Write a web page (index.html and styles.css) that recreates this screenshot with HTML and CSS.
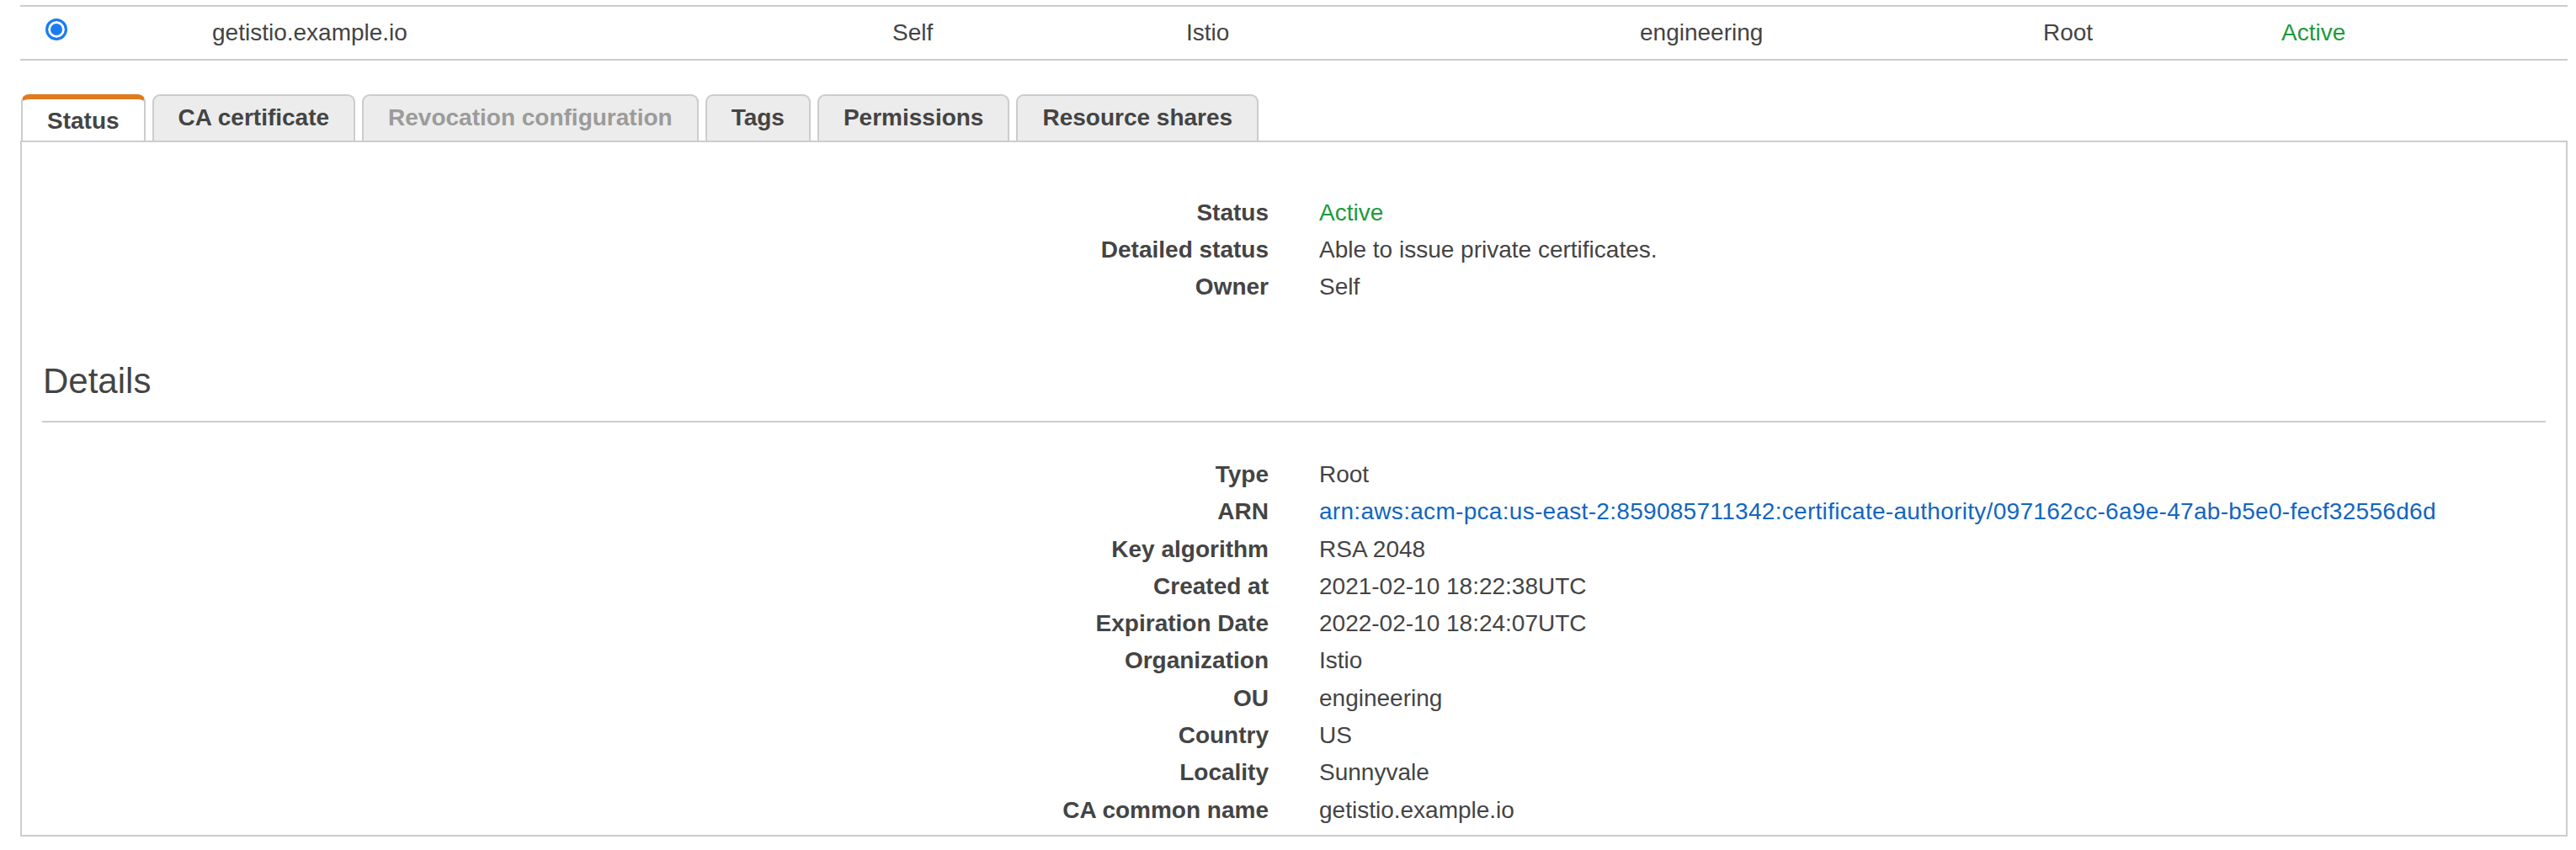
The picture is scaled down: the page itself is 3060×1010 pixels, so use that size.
FILE: index.html
```html
<!DOCTYPE html>
<html lang="en">
<head>
<meta charset="utf-8">
<title>Certificate authority</title>
<link rel="stylesheet" href="styles.css">
</head>
<body>
<div class="page">
  <div class="ca-row">
    <div class="cell cell-radio"><span class="radio"></span></div>
    <div class="cell">getistio.example.io</div>
    <div class="cell">Self</div>
    <div class="cell">Istio</div>
    <div class="cell">engineering</div>
    <div class="cell">Root</div>
    <div class="cell ok">Active</div>
  </div>

  <div class="tabs">
    <div class="tab active">Status</div>
    <div class="tab">CA certificate</div>
    <div class="tab disabled">Revocation configuration</div>
    <div class="tab">Tags</div>
    <div class="tab">Permissions</div>
    <div class="tab">Resource shares</div>
  </div>

  <div class="panel">
    <dl class="kv">
      <dt>Status</dt><dd class="ok">Active</dd>
      <dt>Detailed status</dt><dd>Able to issue private certificates.</dd>
      <dt>Owner</dt><dd>Self</dd>
    </dl>

    <h2 class="section-title">Details</h2>

    <dl class="kv details">
      <dt>Type</dt><dd>Root</dd>
      <dt>ARN</dt><dd><a class="link" href="#">arn:aws:acm-pca:us-east-2:859085711342:certificate-authority/097162cc-6a9e-47ab-b5e0-fecf32556d6d</a></dd>
      <dt>Key algorithm</dt><dd>RSA 2048</dd>
      <dt>Created at</dt><dd>2021-02-10 18:22:38UTC</dd>
      <dt>Expiration Date</dt><dd>2022-02-10 18:24:07UTC</dd>
      <dt>Organization</dt><dd>Istio</dd>
      <dt>OU</dt><dd>engineering</dd>
      <dt>Country</dt><dd>US</dd>
      <dt>Locality</dt><dd>Sunnyvale</dd>
      <dt>CA common name</dt><dd>getistio.example.io</dd>
    </dl>
  </div>
</div>
</body>
</html>
```

FILE: styles.css
```css
* {
  box-sizing: border-box;
}

html, body {
  margin: 0;
  padding: 0;
  background: #ffffff;
}

body {
  font-family: "Liberation Sans", Arial, Helvetica, sans-serif;
  font-size: 28px;
  line-height: 32px;
  color: #444444;
  padding: 6px 10px 0 24px;
}

.page {
  width: 3026px;
}

/* selected table row */
.ca-row {
  display: grid;
  grid-template-columns: 228px 808px 349px 539px 479px 283px 1fr;
  height: 66px;
  border-top: 2px solid #cccccc;
  border-bottom: 2px solid #cccccc;
  align-items: center;
}

.cell {
  white-space: nowrap;
}

.cell-radio {
  align-self: start;
  padding-top: 14px;
  padding-left: 30px;
  height: 100%;
}

.radio {
  display: block;
  width: 26px;
  height: 26px;
  border-radius: 50%;
  border: 3px solid #1b7cf2;
  background: #1b7cf2;
  box-shadow: inset 0 0 0 3px #ffffff;
}

.ok {
  color: #1d9a3b;
}

/* tabs */
.tabs {
  display: flex;
  gap: 8px;
  margin-top: 40px;
  padding-left: 1px;
  height: 55px;
  align-items: flex-end;
}

.tab {
  height: 55px;
  padding: 10px 29px 11px;
  border: 2px solid #cccccc;
  border-bottom: none;
  border-radius: 9px 9px 0 0;
  background: #ececec;
  font-weight: 700;
  color: #444444;
  white-space: nowrap;
}

.tab.active {
  background: #ffffff;
  border-top: 6px solid #e07a1f;
  padding-bottom: 7px;
}

.tab.disabled {
  color: #9b9b9b;
}

/* panel */
.panel {
  border: 2px solid #cccccc;
  padding: 62px 24px 14px 24px;
  height: 827px;
}

.kv {
  display: grid;
  grid-template-columns: 1fr 1fr;
  column-gap: 60px;
  margin: 0;
}

.kv dt,
.kv dd {
  margin: 0;
  line-height: 44px;
  white-space: nowrap;
}

.kv dt {
  text-align: right;
  font-weight: 700;
  color: #444444;
}

.section-title {
  margin: 65px 0 0 0;
  padding: 0 0 22px 1px;
  font-size: 42px;
  line-height: 50px;
  font-weight: 400;
  color: #444444;
  border-bottom: 2px solid #cccccc;
}

.details {
  margin-top: 40px;
}

.details dt,
.details dd {
  line-height: 44.3px;
}

.link {
  color: #1166c0;
  text-decoration: none;
  letter-spacing: 0.3px;
}
```
